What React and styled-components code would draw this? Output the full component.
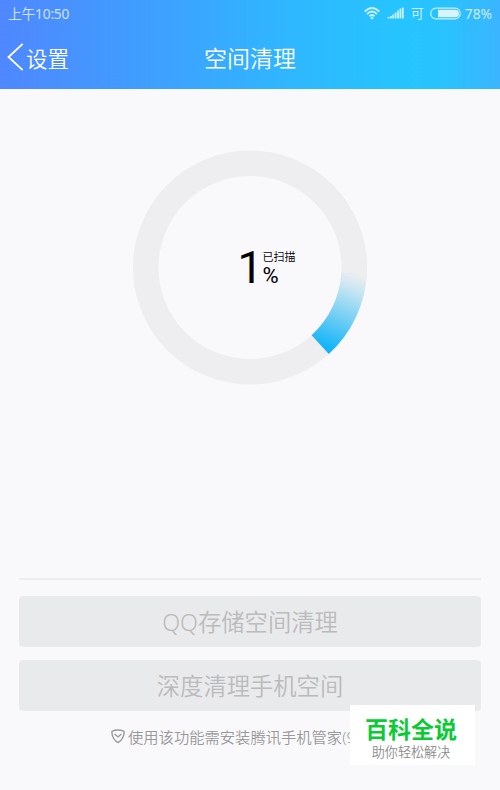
import React from 'react';
import styled, { createGlobalStyle } from 'styled-components';

const GlobalStyle = createGlobalStyle`
  body {
    margin: 0;
    background: #f9f9fc;
  }
`;

const Screen = styled.div`
  position: relative;
  display: flex;
  flex-direction: column;
  width: 500px;
  height: 790px;
  overflow: hidden;
  background: #f9f9fc;
  font-family: 'Noto Sans', 'Noto Sans CJK SC', sans-serif;
`;

const Header = styled.header`
  display: flex;
  flex-direction: column;
  height: 89px;
  color: #fff;
  background: linear-gradient(90deg, #4f87ff 0%, #3f9fff 30%, #2fb7ff 58%, #26c4ff 80%, #28c3ff 88%, #3bb5ff 100%);
`;

const StatusBar = styled.div`
  display: flex;
  align-items: center;
  justify-content: space-between;
  height: 26px;
  padding: 0 8px;
  font-size: 14px;
  color: rgba(255, 255, 255, 0.75);
`;

const Time = styled.span`
  padding-top: 1px;
  font-size: 13.8px;
  line-height: 20px;
  letter-spacing: -0.25px;
`;

const StatusIcons = styled.div`
  display: flex;
  align-items: center;
`;

const Carrier = styled.span`
  margin: 0 6px 0 7px;
  font-size: 13px;
  line-height: 20px;
`;

const Level = styled.span`
  margin-left: 4px;
  padding-top: 1px;
  font-size: 13.8px;
  line-height: 20px;
`;

const TitleBar = styled.div`
  display: grid;
  grid-template-columns: 1fr auto 1fr;
  align-items: center;
  height: 62px;
`;

const Back = styled.div`
  display: flex;
  align-items: center;
  gap: 2px;
  padding-left: 7px;
  font-size: 21.5px;
  font-weight: 350;
`;

const Title = styled.h1`
  margin: 0;
  font-size: 23px;
  font-weight: 350;
`;

const Main = styled.main`
  display: flex;
  flex: 1;
  flex-direction: column;
  padding: 61px 19px 0;
`;

const Gauge = styled.div`
  display: grid;
  place-items: center;
  align-self: center;
  width: 236px;
  height: 235px;

  > * {
    grid-area: 1 / 1;
  }
`;

const Progress = styled.div`
  display: flex;
  align-items: flex-start;
  width: 59px;
  height: 42px;
  padding-left: 34px;
  color: #000;
`;

const Amount = styled.span`
  width: 25px;
  font: 400 45px/42px Roboto, sans-serif;
`;

const Unit = styled.div`
  display: flex;
  flex-direction: column;
  padding-top: 2px;
  white-space: nowrap;
`;

const Caption = styled.span`
  font-size: 11px;
  font-weight: 350;
  line-height: 16px;
`;

const Percent = styled.span`
  font: 400 22px/22px Roboto, sans-serif;
`;

const Actions = styled.div`
  display: flex;
  flex-direction: column;
  gap: 13px;
  margin-top: 193px;
  padding-top: 16px;
  border-top: 2px solid #eeeef0;
`;

const Button = styled.button`
  height: 51px;
  padding: 1px 0 0;
  border: 0;
  border-radius: 4px;
  background: #e9eaec;
  color: #bbb;
  font: 350 23.3px/50px 'Noto Sans', 'Noto Sans CJK SC', sans-serif;
`;

const Note = styled.div`
  display: flex;
  align-items: center;
  gap: 3px;
  height: 24px;
  margin: 13px 0 0 92px;
  color: #999;
  font-size: 15.3px;
  font-weight: 350;
  white-space: nowrap;
`;

const Badge = styled.aside`
  position: absolute;
  left: 350px;
  top: 705px;
  display: flex;
  flex-direction: column;
  align-items: center;
  box-sizing: border-box;
  width: 125px;
  height: 60px;
  padding: 10px 3px 0 0;
  background: #fff;
`;

const BadgeName = styled.strong`
  font-size: 23px;
  font-weight: 700;
  line-height: 29px;
  color: #0acb35;
`;

const BadgeText = styled.span`
  font-size: 13.1px;
  font-weight: 350;
  line-height: 16px;
  color: #8c8c8c;
`;

const ACTIONS = ['QQ存储空间清理', '深度清理手机空间'];

const WifiIcon = () => (
  <svg width='16' height='13' viewBox='0 0 16 13' fill='none' stroke='currentColor' strokeWidth='1.9'>
    <path d='M.7 4.6Q8-2.4 15.3 4.6M3.1 7Q8 2.2 12.9 7M5.4 9.3Q8 6.8 10.6 9.3' />
    <circle cx='8' cy='11' r='1.3' fill='currentColor' stroke='none' />
  </svg>
);

const SignalIcon = () => (
  <svg width='17' height='12' viewBox='0 0 17 12' fill='currentColor' style={{ marginLeft: 7 }}>
    {[1.5, 2.5, 4, 6, 8, 10, 11].map((height, index) => (
      <rect key={index} x={0.5 + index * 2.4} y={11.5 - height} width='1.8' height={height} />
    ))}
  </svg>
);

const BatteryIcon = () => (
  <svg width='31' height='13' viewBox='0 0 31 13'>
    <rect x='.7' y='1.1' width='29.6' height='10.8' rx='5.4' fill='none' stroke='currentColor' strokeWidth='1.1' />
    <path d='M8 2.7h17.2a3.8 3.8 0 0 1 0 7.6H8z' fill='#d8f4ff' />
  </svg>
);

const BackIcon = () => (
  <svg width='17' height='28' viewBox='0 0 17 28' fill='none' stroke='#fff' strokeWidth='1.8'>
    <path d='M15.7.8 1.5 14l14.2 13.2' />
  </svg>
);

const ShieldIcon = () => (
  <svg width='14' height='15' viewBox='0 0 14 15' fill='none' stroke='currentColor' strokeWidth='1.4'>
    <path d='M.9 2.3Q7-.2 13.1 2.3C13.3 7.6 11.2 11 7 13.6 2.8 11 .7 7.6.9 2.3z' strokeLinejoin='round' />
    <path d='M3.6 4.9 7 7.9l3.4-3' />
  </svg>
);

const Ring = () => (
  <svg width='236' height='235' viewBox='0 0 236 235' fill='none' strokeWidth='25.5'>
    <defs>
      <linearGradient id='sweep' gradientUnits='userSpaceOnUse' x1='223' y1='122' x2='193' y2='197'>
        <stop offset='0' stopColor='#eeeef0' />
        <stop offset='.16' stopColor='#d3e8f2' />
        <stop offset='.5' stopColor='#86d4f4' />
        <stop offset='.8' stopColor='#40c1f6' />
        <stop offset='1' stopColor='#13b5f8' />
      </linearGradient>
    </defs>
    <circle cx='118' cy='117.5' r='104.3' stroke='#eeeef0' />
    <path d='M222.1 123.3A104.3 104.3 0 0 1 188.2 194.6' stroke='url(#sweep)' />
  </svg>
);

function App() {
  return (
    <Screen>
      <GlobalStyle />
      <Header>
        <StatusBar>
          <Time>上午10:50</Time>
          <StatusIcons>
            <WifiIcon />
            <SignalIcon />
            <Carrier>可</Carrier>
            <BatteryIcon />
            <Level>78%</Level>
          </StatusIcons>
        </StatusBar>
        <TitleBar>
          <Back>
            <BackIcon />
            设置
          </Back>
          <Title>空间清理</Title>
        </TitleBar>
      </Header>
      <Main>
        <Gauge>
          <Ring />
          <Progress>
            <Amount>1</Amount>
            <Unit>
              <Caption>已扫描</Caption>
              <Percent>%</Percent>
            </Unit>
          </Progress>
        </Gauge>
        <Actions>
          {ACTIONS.map((label) => (
            <Button key={label}>{label}</Button>
          ))}
        </Actions>
        <Note>
          <ShieldIcon />
          使用该功能需安装腾讯手机管家(9
        </Note>
      </Main>
      <Badge>
        <BadgeName>百科全说</BadgeName>
        <BadgeText>助你轻松解决</BadgeText>
      </Badge>
    </Screen>
  );
}

export default App;
